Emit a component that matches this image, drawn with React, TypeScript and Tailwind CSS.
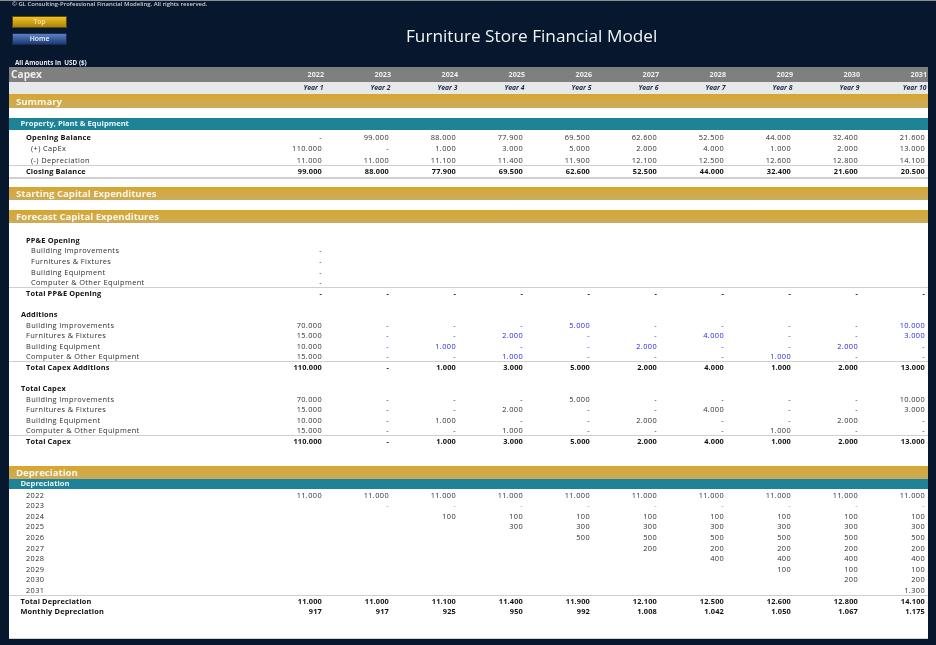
import React from 'react'

const years = [2022, 2023, 2024, 2025, 2026, 2027, 2028, 2029, 2030, 2031]

type Cell = string | { v: string; blue?: boolean; faint?: boolean }
const b = (v: string) => ({ v, blue: true })
const f = { v: '-', faint: true }
const d = '-'
const e = ''

const Values = ({ cells, bold }: { cells: Cell[]; bold?: boolean }) => (
  <>
    {cells.map((c, i) => {
      const cell = typeof c === 'string' ? { v: c } : c
      const color = cell.blue ? 'text-[#2424e6]' : cell.faint ? 'text-[#999999]' : bold ? 'font-bold text-[#111111]' : 'text-[#2e2e2e]'
      return (
        <div key={i} className={`pr-[3px] text-right ${color}`}>
          {cell.v}
        </div>
      )
    })}
  </>
)

const Row = ({
  label,
  cells = [],
  indent = 'pl-[17px]',
  bold,
  plain,
  line,
  height = 'h-[10.58px]',
}: {
  label: string
  cells?: Cell[]
  indent?: string
  bold?: boolean
  plain?: boolean
  line?: boolean
  height?: string
}) => (
  <div
    className={`grid grid-cols-[249px_repeat(10,67px)] items-center pt-[1px] text-[7.4px] leading-none font-medium ${height} ${bold ? 'tracking-[0.15px] text-[#111111]' : 'tracking-[0.38px] text-[#2e2e2e]'} ${plain ? 'tracking-[0.38px]' : ''} ${line ? 'shadow-[0_-1px_0_#cfcfcf]' : ''}`}
  >
    <div className={`${indent} ${bold ? 'font-bold' : ''} ${plain ? 'tracking-[0.2px]' : ''}`}>{label}</div>
    <Values cells={cells} bold={bold && !plain} />
  </div>
)

const Gold = ({ title, height = 'h-[13px]' }: { title: string; height?: string }) => (
  <div className={`${height} flex items-center bg-gradient-to-b from-[#d6a72c] to-[#cbac5c] pt-[2px] pl-[7px] text-[9.6px] font-bold text-[#fbf6e6]`}>
    {title}
  </div>
)

const Teal = ({ title, height }: { title: string; height: string }) => (
  <div className={`${height} flex items-center bg-[#1f8397] pl-[11.5px] text-[7.6px] font-bold text-[#e8f4f6]`}>{title}</div>
)

const blank10 = Array(9).fill(d)
const depreciation: [string, Cell[]][] = [
  ['2022', Array(10).fill('11.000')],
  ['2023', [e, f, f, f, f, f, f, f, f, f]],
  ['2024', [e, e, '100', '100', '100', '100', '100', '100', '100', '100']],
  ['2025', [e, e, e, '300', '300', '300', '300', '300', '300', '300']],
  ['2026', [e, e, e, e, '500', '500', '500', '500', '500', '500']],
  ['2027', [e, e, e, e, e, '200', '200', '200', '200', '200']],
  ['2028', [e, e, e, e, e, e, '400', '400', '400', '400']],
  ['2029', [e, e, e, e, e, e, e, '100', '100', '100']],
  ['2030', [e, e, e, e, e, e, e, e, '200', '200']],
  ['2031', [e, e, e, e, e, e, e, e, e, '1.300']],
]

export default function App() {
  return (
    <div className="relative flex h-[645px] w-[936px] flex-col overflow-hidden border-t border-[#8a8f96] bg-[#07182e] font-['Open_Sans',sans-serif] blur-[0.45px]">
      <div className="h-[7px] pl-[12px] text-[5.95px] leading-[7px] font-semibold text-[#c9ced6]">
        © GL Consulting-Professional Financial Modeling. All rights reserved.
      </div>
      <div className="flex h-[46px]">
        <div className="ml-[12px] flex w-[55px] flex-col gap-[5px] pt-[8px]">
          <div className="flex h-[12px] items-center justify-center border border-[#5a4a10] bg-gradient-to-b from-[#f2c21d] to-[#a98410] text-[6.8px] font-semibold text-[#f4e4a0]">
            Top
          </div>
          <div className="flex h-[12px] items-center justify-center border border-[#1b2c4d] bg-gradient-to-b from-[#5a83c4] to-[#1f3a75] text-[6.8px] font-semibold text-[#eef2fa]">
            Home
          </div>
        </div>
        <div className="ml-[339px] pt-[17px] text-[17.2px] leading-[22px] whitespace-nowrap text-[#f2f4f7]">Furniture Store Financial Model</div>
      </div>
      <div className="h-[13px] pt-[5px] pl-[15px] text-[6.3px] leading-[8px] font-bold text-[#e8ebf0]">All Amounts in&nbsp; USD ($)</div>

      <div className="ml-[9px] w-[919px] flex-none border-b border-[#cfd3d8] bg-white">
        <div className="grid h-[14.5px] grid-cols-[249px_repeat(10,67px)] items-center bg-[#7f7f7f] pr-[1px] text-[#eeeeee]">
          <div className="pl-[2px] text-[10.2px] font-bold">Capex</div>
          {years.map((y) => (
            <div key={y} className="pr-[1px] text-right text-[7.2px] font-bold">
              {y}
            </div>
          ))}
        </div>
        <div className="grid h-[12.5px] grid-cols-[249px_repeat(10,67px)] items-end bg-[#e7e8ea] pb-[1px] text-[#1d2c4a]">
          <div />
          {years.map((y, i) => (
            <div key={y} className="pr-[1.5px] text-right text-[6.8px] font-bold whitespace-nowrap italic">
              Year {i + 1}
            </div>
          ))}
        </div>
        <Gold title="Summary" height="h-[14px]" />
        <div className="h-[10px]" />
        <Teal title="Property, Plant & Equipment" height="h-[12px]" />
        <div className="h-[1.5px]" />
        <Row height="h-[11.4px]" bold plain label="Opening Balance" cells={[d, '99.000', '88.000', '77.900', '69.500', '62.600', '52.500', '44.000', '32.400', '21.600']} />
        <Row height="h-[11.4px]" indent="pl-[22px]" label="(+) CapEx" cells={['110.000', d, '1.000', '3.000', '5.000', '2.000', '4.000', '1.000', '2.000', '13.000']} />
        <Row height="h-[11.4px]" indent="pl-[22px]" label="(-) Depreciation" cells={['11.000', '11.000', '11.100', '11.400', '11.900', '12.100', '12.500', '12.600', '12.800', '14.100']} />
        <Row height="h-[11.4px]" bold line label="Closing Balance" cells={['99.000', '88.000', '77.900', '69.500', '62.600', '52.500', '44.000', '32.400', '21.600', '20.500']} />
        <div className="h-[10px] border-t-2 border-[#d0d0d0]" />

        <Gold title="Starting Capital Expenditures" />
        <div className="h-[10px]" />
        <Gold title="Forecast Capital Expenditures" />
        <div className="h-[11.75px]" />

        <Row bold label="PP&E Opening" />
        <Row indent="pl-[22px]" label="Building Improvements" cells={[d]} />
        <Row indent="pl-[22px]" label="Furnitures & Fixtures" cells={[d]} />
        <Row indent="pl-[22px]" label="Building Equipment" cells={[d]} />
        <Row indent="pl-[22px]" label="Computer & Other Equipment" cells={[d]} />
        <Row bold line label="Total PP&E Opening" cells={[d, ...blank10]} />
        <div className="h-[10.58px]" />

        <Row bold indent="pl-[12px]" label="Additions" />
        <Row label="Building Improvements" cells={['70.000', b('-'), b('-'), b('-'), b('5.000'), b('-'), b('-'), b('-'), b('-'), b('10.000')]} />
        <Row label="Furnitures & Fixtures" cells={['15.000', b('-'), b('-'), b('2.000'), b('-'), b('-'), b('4.000'), b('-'), b('-'), b('3.000')]} />
        <Row label="Building Equipment" cells={['10.000', b('-'), b('1.000'), b('-'), b('-'), b('2.000'), b('-'), b('-'), b('2.000'), b('-')]} />
        <Row label="Computer & Other Equipment" cells={['15.000', b('-'), b('-'), b('1.000'), b('-'), b('-'), b('-'), b('1.000'), b('-'), b('-')]} />
        <Row bold line label="Total Capex Additions" cells={['110.000', d, '1.000', '3.000', '5.000', '2.000', '4.000', '1.000', '2.000', '13.000']} />
        <div className="h-[10.58px]" />

        <Row bold indent="pl-[12px]" label="Total Capex" />
        <Row label="Building Improvements" cells={['70.000', d, d, d, '5.000', d, d, d, d, '10.000']} />
        <Row label="Furnitures & Fixtures" cells={['15.000', d, d, '2.000', d, d, '4.000', d, d, '3.000']} />
        <Row label="Building Equipment" cells={['10.000', d, '1.000', d, d, '2.000', d, d, '2.000', d]} />
        <Row label="Computer & Other Equipment" cells={['15.000', d, d, '1.000', d, d, d, '1.000', d, d]} />
        <Row bold line label="Total Capex" cells={['110.000', d, '1.000', '3.000', '5.000', '2.000', '4.000', '1.000', '2.000', '13.000']} />
        <div className="h-[19.5px]" />

        <Gold title="Depreciation" />
        <Teal title="Depreciation" height="h-[10px]" />
        <div className="h-[0.7px]" />
        {depreciation.map(([label, cells]) => (
          <Row key={label} label={label} cells={cells} height="h-[10.6px]" />
        ))}
        <Row bold line indent="pl-[11.5px]" label="Total Depreciation" cells={['11.000', '11.000', '11.100', '11.400', '11.900', '12.100', '12.500', '12.600', '12.800', '14.100']} />
        <Row bold indent="pl-[11.5px]" label="Monthly Depreciation" cells={['917', '917', '925', '950', '992', '1.008', '1.042', '1.050', '1.067', '1.175']} />
        <div className="h-[21.5px]" />
      </div>
    </div>
  )
}
